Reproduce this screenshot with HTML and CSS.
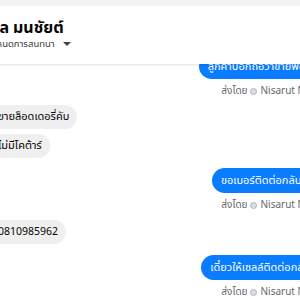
FILE: index.html
```html
<!DOCTYPE html>
<html lang="th">
<head>
<meta charset="utf-8">
<link rel="stylesheet" href="styles.css">
</head>
<body>
<div class="page">
  <div class="topstrip"></div>
  <header class="header">
    <div class="name"><span class="first-name"><span>พล</span></span><span>มนชัยต์</span></div>
    <div class="sub">กำหนดการสนทนา <span class="caret"></span></div>
  </header>
  <main class="chat">
    <div class="out first">
      <div class="bubble blue">ลูกค้าบอกถือว่าขายพอร์ตเราค่ะ</div>
      <div class="sender">ส่งโดย <span class="dot"></span> Nisarut Nakprasert</div>
    </div>
    <div class="in">
      <div class="bubble gray">ขายล็อดเดอรี่คับ</div>
      <div class="bubble gray">ไม่มีโคต้าร์</div>
    </div>
    <div class="out">
      <div class="bubble blue">ขอเบอร์ติดต่อกลับด้วยนะคะ</div>
      <div class="sender">ส่งโดย <span class="dot"></span> Nisarut Nakprasert</div>
    </div>
    <div class="in">
      <div class="bubble gray num">0810985962</div>
    </div>
    <div class="out">
      <div class="bubble blue">เดี๋ยวให้เซลล์ติดต่อกลับไปนะคะ</div>
      <div class="sender">ส่งโดย <span class="dot"></span> Nisarut Nakprasert</div>
    </div>
  </main>
</div>
</body>
</html>
```

FILE: styles.css
```css
html, body {
  margin: 0;
  padding: 0;
  background: #fff;
}
body {
  font-family: "Noto Sans Thai", "Noto Sans", "DejaVu Sans", sans-serif;
  color: #050505;
}
.page {
  width: 300px;
  height: 300px;
  overflow: hidden;
  position: relative;
}
.topstrip {
  height: 6px;
  background: #f3f3f4;
}
.header {
  position: relative;
  z-index: 2;
  height: 58px;
  background: #fff;
  box-shadow: 0 1px 2px rgba(0,0,0,0.12);
  display: flex;
  flex-direction: column;
  justify-content: center;
  box-sizing: border-box;
  padding-bottom: 2px;
}
.name {
  font-weight: 700;
  font-size: 16px;
  line-height: 20px;
  white-space: nowrap;
  display: flex;
  gap: 4px;
}
.first-name {
  width: 9px;
  display: flex;
  justify-content: flex-end;
  flex-shrink: 0;
}
.sub {
  font-size: 9.5px;
  line-height: 13px;
  color: #3a3b3c;
  display: flex;
  align-items: center;
  gap: 6px;
  margin-left: -13px;
}
.caret {
  width: 0;
  height: 0;
  border-left: 4px solid transparent;
  border-right: 4px solid transparent;
  border-top: 4px solid #444;
  margin-left: 2px;
}
.chat {
  display: flex;
  flex-direction: column;
  margin-right: -50px;
  margin-left: -16px;
}
.out {
  display: flex;
  flex-direction: column;
  align-items: flex-end;
}
.out.first {
  margin-top: -10px;
}
.in {
  display: flex;
  flex-direction: column;
  align-items: flex-start;
  gap: 5px;
  margin-top: 7px;
  margin-bottom: 10px;
}
.in + .out + .in {
  margin-top: 8px;
  margin-bottom: 11px;
}
.bubble {
  white-space: nowrap;
  font-size: 11px;
  line-height: 24px;
  height: 24px;
  padding: 0 9px;
  border-radius: 13px;
}
.blue {
  background: #0a7cff;
  color: #fff;
  height: 25px;
  line-height: 25px;
}
.gray {
  background: #efefef;
  color: #050505;
}
.in .gray {
  padding-left: 14px;
  padding-right: 8px;
}
.in .num {
  font-size: 10.5px;
}
.sender {
  font-size: 10px;
  line-height: 14px;
  color: #65676b;
  margin-top: 5px;
  white-space: nowrap;
  display: flex;
  align-items: center;
  gap: 3px;
}
.dot {
  width: 7px;
  height: 7px;
  border-radius: 50%;
  border: 1px solid #b0b3b8;
  box-sizing: border-box;
  background: #dadde1;
}
```
